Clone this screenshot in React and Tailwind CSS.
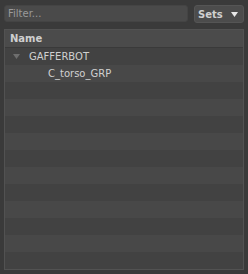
const rows = [
  { label: 'GAFFERBOT', depth: 0, expanded: true },
  { label: 'C_torso_GRP', depth: 1 },
];

const font = { fontFamily: '"DejaVu Sans", sans-serif' };

const App = () => {
  const filled = [...rows];
  while (filled.length < 13) filled.push(null);

  return (
    <div
      className="w-[248px] h-[274px] bg-[#3a3a3a] px-[4px] pt-[5px] text-[10px] flex flex-col"
      style={font}>
      <div className="flex items-start gap-[6px]">
        <div className="w-[184px] h-[17px] bg-[#4a4a4a] rounded-[3px] border border-[#444] flex items-center px-[3px] text-[#9a9a9a]">
          Filter...
        </div>
        <button className="w-[50px] h-[18px] bg-[#4c4c4c] rounded-[3px] border border-[#555] flex items-center justify-between pl-[3px] pr-[5px] text-[#d0d0d0] font-bold">
          <span>Sets</span>
          <svg width="7" height="5" viewBox="0 0 7 5">
            <path d="M0 0H7L3.5 5Z" fill="#e8e8e8" />
          </svg>
        </button>
      </div>

      <div className="mt-[6px] w-[240px] h-[241px] border border-[#525252] bg-[#424242] flex flex-col">
        <div className="h-[19px] bg-[#4b4b4b] border-b border-[#3a3a3a] flex items-center pl-[5px] font-bold text-[#cfcfcf]">
          Name
        </div>
        {filled.map((row, i) => (
          <div
            key={i}
            className={`h-[17px] shrink-0 flex items-center ${i % 2 === 1 ? 'bg-[#484848]' : 'bg-[#424242]'}`}>
            {row && (
              <div
                className="flex items-center text-[#d0d0d0]"
                style={{ paddingLeft: row.depth === 0 ? 8 : 43 }}>
                {row.depth === 0 && (
                  <svg width="7" height="5" viewBox="0 0 7 5" className="mr-[9px]">
                    <path d="M0 0H7L3.5 5Z" fill="#6e6e6e" />
                  </svg>
                )}
                {row.label}
              </div>
            )}
          </div>
        ))}
      </div>
    </div>
  );
};

export default App;
